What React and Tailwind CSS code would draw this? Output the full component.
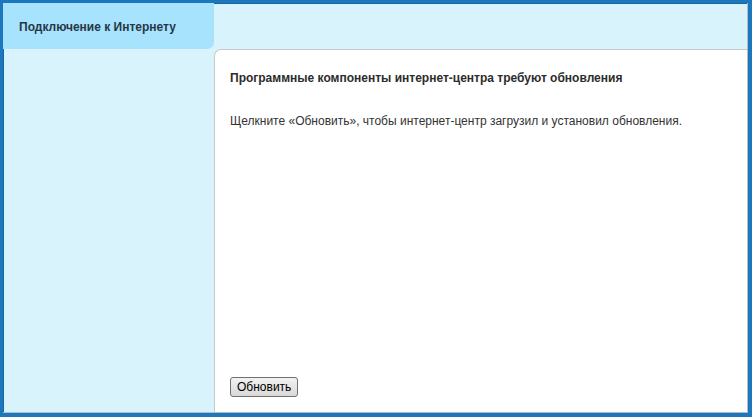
import React from 'react';

const App = () => {
    return (
        <div className="w-[752px] h-[417px] bg-[#1c77bd] pt-[3px] pl-[3px] pr-[4px] pb-[4px] font-['Liberation_Sans',Arial,sans-serif] text-[12px]">
            <div className="w-full h-full flex flex-col bg-[#d9f3fd] border-r border-b border-[#b4bcc2] shadow-[inset_1px_1px_0_#1466a6]">
                <div className="flex h-[46px] shrink-0">
                    <div className="w-[211px] bg-[#a7e3fc] rounded-br-[7px] flex items-center pl-4 pt-[1px] font-bold text-[#263747]">
                        Подключение к Интернету
                    </div>
                    <div className="flex-1" />
                </div>
                <div className="flex flex-1 min-h-0">
                    <div className="w-[211px]" />
                    <div className="flex-1 bg-white rounded-tl-[7px] border-l border-t border-[#c4c8cc] flex flex-col pl-[15px] pt-[19px] pb-[15px] text-[#333333]">
                        <div className="font-bold text-[#2c2c2c]">Программные компоненты интернет-центра требуют обновления</div>
                        <div className="mt-[25px]">Щелкните «Обновить», чтобы интернет-центр загрузил и установил обновления.</div>
                        <div className="flex-1" />
                        <div>
                            <button className="h-[20px] px-[6px] border border-[#707070] rounded-[3px] bg-gradient-to-b from-[#f2f2f2] to-[#d9d9d9] text-[12px] text-black leading-none">
                                Обновить
                            </button>
                        </div>
                    </div>
                </div>
            </div>
        </div>
    );
};

export default App;
